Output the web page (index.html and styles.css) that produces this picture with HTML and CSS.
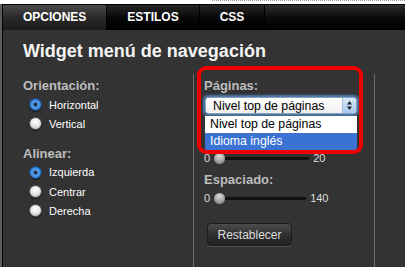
FILE: index.html
```html
<!DOCTYPE html>
<html>
  <head>
    <meta charset="utf-8">
    <title>Widget menú de navegación</title>
    <link rel="stylesheet" href="styles.css">
  </head>
  <body>
    <div class="topstrip"></div>
    <div class="panel">
      <div class="tabs">
        <div class="tab active">OPCIONES</div>
        <div class="tab">ESTILOS</div>
        <div class="tab">CSS</div>
      </div>

      <div class="content">
        <h1 class="title">Widget menú de navegación</h1>

        <div class="cols">
          <div class="col col-left">
            <div class="label">Orientación:</div>
            <div class="radio-row first"><span class="radio checked"></span>Horizontal</div>
            <div class="radio-row"><span class="radio"></span>Vertical</div>

            <div class="label group">Alinear:</div>
            <div class="radio-row first"><span class="radio checked"></span>Izquierda</div>
            <div class="radio-row"><span class="radio"></span>Centrar</div>
            <div class="radio-row"><span class="radio"></span>Derecha</div>
          </div>

          <div class="col col-mid">
            <div class="label">Páginas:</div>
            <div class="select">
              <span class="select-text">Nivel top de páginas</span>
              <span class="select-arrows">
                <svg width="7" height="11" viewBox="0 0 7 11"><path d="M3.5 1 L6 4.5 L1 4.5 Z M3.5 10 L6 6.5 L1 6.5 Z" fill="#222"/></svg>
              </span>
            </div>

            <div class="slider-row under-list">
              <span class="num">0</span>
              <span class="track short"><span class="thumb"></span></span>
              <span class="num max">20</span>
            </div>

            <div class="label gap-small">Espaciado:</div>
            <div class="slider-row">
              <span class="num">0</span>
              <span class="track"><span class="thumb"></span></span>
              <span class="num max">140</span>
            </div>

            <button class="reset" type="button">Restablecer</button>

            <ul class="dropdown">
              <li>Nivel top de páginas</li>
              <li class="selected">Idioma inglés</li>
            </ul>
            <div class="highlight"></div>
          </div>

          <div class="col col-right"></div>
        </div>
      </div>
    </div>
  </body>
</html>
```

FILE: styles.css
```css
html{
  font-family: "Liberation Sans", Arial, sans-serif;
}
body{
  margin: 0;
  background-color: #ffffff;
  height: 267px;
  overflow: hidden;
}
.topstrip {
  height: 4px;
  margin-left: 212px;
  border-top: 1px dotted #9a9a9a;
  box-sizing: border-box;
}
.panel {
  background-color: #333333;
  border-left: 2px solid #5c5c5c;
  height: 263px;
}
.tabs {
  display: flex;
  height: 25px;
  border-top: 1px solid #000000;
  border-left: 1px solid #000000;
  background: linear-gradient(#2e2e2e, #0a0a0a 50%, #000000);
}
.tab {
  color: #ffffff;
  font-weight: bold;
  font-size: 12px;
  line-height: 25px;
  padding: 0 20px;
  border-right: 1px solid #000000;
  background: linear-gradient(#262626, #050505 55%, #000000);
}
.tab.active {
  background: linear-gradient(#4a4a4a, #2a2a2a 50%, #1a1a1a);
}
.content {
  border-left: 1px solid #000000;
  height: 237px;
}
.title {
  margin: 0;
  padding: 10px 0 0 20px;
  color: #f4f4f4;
  font-size: 18px;
  line-height: 22px;
  height: 34px;
}
.cols {
  display: flex;
  height: 193px;
}
.col {
  padding-top: 4px;
}
.col-left {
  width: 170px;
  padding-left: 20px;
}
.col-mid {
  position: relative;
  width: 170px;
  padding-left: 10px;
  border-left: 1px solid #6e6e6e;
  border-right: 1px solid #6e6e6e;
}
.label {
  color: #bdbdbd;
  font-weight: bold;
  font-size: 13px;
  line-height: 16px;
}
.label.group {
  margin-top: 12px;
}
.gap-small {
  margin-top: 4px;
}
.radio-row {
  display: flex;
  align-items: center;
  height: 19.3px;
  margin-left: 6px;
  color: #ffffff;
  font-size: 11px;
}
.radio-row.first {
  margin-top: 1px;
}
.radio {
  width: 11px;
  height: 11px;
  border-radius: 50%;
  margin-right: 7px;
  border: 0.5px solid #555555;
  background: radial-gradient(circle at 50% 35%, #ffffff, #e8e8e8 45%, #a8a8a8);
  box-shadow: 0 1px 1px rgba(0, 0, 0, 0.6);
}
.radio.checked {
  background: radial-gradient(circle, #1b2d4a 0, #1b2d4a 1.6px, #5fa6ec 2.4px, #3a86d8 60%, #1f5fae);
  border-color: #1c4a86;
}
.select {
  display: flex;
  align-items: center;
  width: 150px;
  height: 15px;
  margin-top: 3px;
  margin-left: 1px;
  background: linear-gradient(#ffffff, #f0f0f0);
  border: 1px solid #8a9fb8;
  border-radius: 3px;
  box-shadow: 0 0 2px 2px rgba(90, 150, 220, 0.75);
}
.select-text {
  flex: 1;
  padding-left: 7px;
  font-size: 12.3px;
  color: #000000;
}
.select-arrows {
  display: flex;
  align-items: center;
  justify-content: center;
  width: 13px;
  height: 15px;
  border-left: 1px solid #a9bfd8;
  background: linear-gradient(#d7e8fb, #a8c9ef);
  border-radius: 0 3px 3px 0;
}
.slider-row {
  display: flex;
  align-items: center;
  height: 20px;
  color: #dddddd;
  font-size: 11px;
}
.slider-row.under-list {
  margin-top: 34px;
}
.num.max {
  margin-left: 4px;
}
.track {
  position: relative;
  width: 86px;
  height: 3px;
  margin-left: 10px;
  background-color: #111111;
  border-radius: 1px;
}
.track.short {
  width: 89px;
}
.thumb {
  position: absolute;
  left: -6px;
  top: -4px;
  width: 11px;
  height: 11px;
  border-radius: 50%;
  background: radial-gradient(circle at 50% 30%, #d8d8d8, #a8a8a8 50%, #6e6e6e);
}
.reset {
  margin-top: 15px;
  margin-left: 3px;
  width: 85px;
  height: 23px;
  font-family: "Liberation Sans", Arial, sans-serif;
  font-size: 12px;
  color: #dedede;
  border: 1px solid #1c1c1c;
  border-radius: 4px;
  background: linear-gradient(#4c4c4c, #2e2e2e 55%, #222222);
  box-shadow: 0 1px 0 #555555;
}
.dropdown {
  position: absolute;
  left: 11px;
  top: 42px;
  width: 152px;
  margin: 0;
  padding: 0;
  list-style: none;
  background-color: #ffffff;
  font-size: 12.3px;
}
.dropdown li {
  height: 17px;
  line-height: 17px;
  padding-left: 5px;
  color: #000000;
}
.dropdown li.selected {
  background-color: #3a73d1;
  color: #ffffff;
}
.highlight {
  position: absolute;
  left: 3px;
  top: -8px;
  width: 166px;
  height: 88px;
  box-sizing: border-box;
  border: 4px solid #ee0000;
  border-radius: 9px;
}
```
